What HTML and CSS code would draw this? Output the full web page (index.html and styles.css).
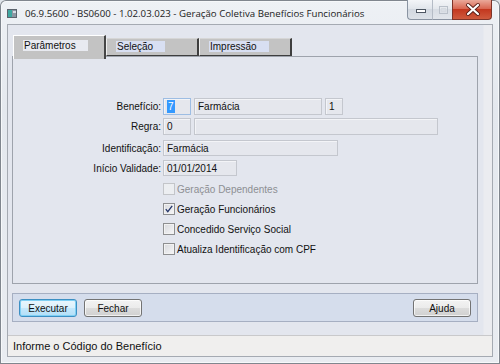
FILE: index.html
```html
<!DOCTYPE html>
<html lang="pt">
<head>
<meta charset="utf-8">
<title>Geração Coletiva Benefícios Funcionários</title>
<link rel="stylesheet" href="styles.css">
</head>
<body>
<div class="window">
  <div class="titlebar">
    <svg class="app-icon" width="10" height="9" viewBox="0 0 10 9">
      <rect x="0.5" y="0.5" width="9" height="8" fill="#8d97a3" stroke="#5b636d"/>
      <rect x="1" y="1" width="4" height="7" fill="#3fa7a1"/>
      <rect x="6" y="2" width="3" height="2" fill="#d7dde4"/>
    </svg>
    <span class="title">06.9.5600 - BS0600 - 1.02.03.023 - Geração Coletiva Benefícios Funcionários</span>
    <div class="controls">
      <span class="ctl min">
        <svg width="25" height="20" viewBox="0 0 25 20"><rect x="8.5" y="9.5" width="9" height="3" fill="#fff" stroke="#4d5662"/></svg>
      </span>
      <span class="ctl max">
        <svg width="20" height="20" viewBox="0 0 20 20"><rect x="6.5" y="6.5" width="8" height="7" fill="none" stroke="#b9c0c9"/><rect x="8.5" y="8.5" width="4" height="3" fill="none" stroke="#d5dae0"/></svg>
      </span>
      <span class="ctl close">
        <svg width="40" height="20" viewBox="0 0 40 20"><path d="M15 5 L25 14 M25 5 L15 14" stroke="#5a1f18" stroke-width="4" stroke-linecap="round"/><path d="M15 5 L25 14 M25 5 L15 14" stroke="#fff" stroke-width="2.2" stroke-linecap="round"/></svg>
      </span>
    </div>
  </div>
  <div class="frame">
    <div class="client">
      <div class="content">
        <div class="tabs">
          <div class="tab active"><span class="tab-label">Parâmetros</span></div>
          <div class="tab"><span class="tab-label">Seleção</span></div>
          <div class="tab"><span class="tab-label">Impressão</span></div>
        </div>
        <div class="panel">
          <div class="row r1">
            <span class="lbl">Benefício:</span>
            <span class="field focus w-code"><span class="sel">7</span></span>
            <span class="field w-name">Farmácia</span>
            <span class="field w-one">1</span>
          </div>
          <div class="row r2">
            <span class="lbl">Regra:</span>
            <span class="field w-code">0</span>
            <span class="field w-long"></span>
          </div>
          <div class="row r3">
            <span class="lbl">Identificação:</span>
            <span class="field w-ident">Farmácia</span>
          </div>
          <div class="row r4">
            <span class="lbl">Início Validade:</span>
            <span class="field w-date">01/01/2014</span>
          </div>
          <div class="checks">
            <div class="check disabled"><span class="box"></span><span class="ck-text">Geração Dependentes</span></div>
            <div class="check"><span class="box checked"><svg width="12" height="12" viewBox="0 0 12 12"><path d="M2.8 6.2 L4.8 8.6 L9.2 2.8" fill="none" stroke="#24366a" stroke-width="1.3"/></svg></span><span class="ck-text">Geração Funcionários</span></div>
            <div class="check"><span class="box"></span><span class="ck-text">Concedido Serviço Social</span></div>
            <div class="check"><span class="box"></span><span class="ck-text">Atualiza Identificação com CPF</span></div>
          </div>
        </div>
        <div class="buttonbar">
          <button class="btn default">Executar</button>
          <button class="btn">Fechar</button>
          <button class="btn help">Ajuda</button>
        </div>
      </div>
      <div class="status">Informe o Código do Benefício</div>
    </div>
  </div>
</div>
</body>
</html>
```
FILE: styles.css
```css
* { box-sizing: border-box; }
html, body { margin: 0; padding: 0; }
body {
  width: 500px;
  height: 364px;
  overflow: hidden;
  font-family: "Liberation Sans", Arial, sans-serif;
  font-size: 10px;
  color: #000;
  background: #dfe4ea;
}
.window {
  width: 500px;
  height: 364px;
  display: flex;
  flex-direction: column;
  background: linear-gradient(#eef1f5, #e4e8ee 30%, #e9ecf1);
  box-shadow: inset 0 0 0 1px #80868e, inset 0 0 0 2px #f6f8fa;
  border-radius: 6px 6px 0 0;
}
.titlebar {
  height: 24px;
  display: flex;
  align-items: center;
  padding-left: 7px;
  padding-top: 2px;
}
.app-icon { margin-right: 8px; flex: none; }
.title {
  font-family: "Open Sans", "Liberation Sans", sans-serif;
  font-size: 9.7px;
  color: #1b1b1b;
  white-space: nowrap;
}
.controls {
  margin-left: auto;
  margin-right: 8px;
  align-self: flex-start;
  margin-top: -2px;
  display: flex;
  height: 20px;
}
.ctl { display: block; height: 20px; }
.ctl svg { display: block; }
.min {
  width: 25px;
  border: 1px solid #8a94a2;
  border-top: none;
  border-right: none;
  border-radius: 0 0 0 4px;
  background: linear-gradient(#f3f5f8, #dfe4ea 50%, #d2d8e0 50%, #dde2e8);
}
.max {
  width: 20px;
  border-bottom: 1px solid #8a94a2;
  border-left: 1px solid #b5bcc6;
  background: linear-gradient(#f3f5f8, #e3e7ec 50%, #d8dde4 50%, #e2e6eb);
}
.close {
  width: 40px;
  border: 1px solid #7e3328;
  border-top: none;
  border-radius: 0 0 4px 0;
  background: linear-gradient(#eaa99a, #d7604a 50%, #c3381f 50%, #cf5a3e);
}
.frame {
  flex: 1;
  display: flex;
  padding: 0 7px 7px 7px;
}
.client {
  flex: 1;
  display: flex;
  flex-direction: column;
  border: 1px solid #a5aab2;
}
.content {
  height: 310px;
  padding: 10px 14px 0 4px;
  background: linear-gradient(to right, #e3e6ee 0, #e3e6ee 475px, #ebecf0 476px);
}
.tabs {
  display: flex;
  align-items: flex-end;
  height: 21px;
  padding-left: 1px;
}
.tab {
  width: 93px;
  height: 18px;
  padding: 2px 0 0 9px;
  background: #c3c3c3;
  border-top: 1px solid #d6d6d6;
  border-left: 1px solid #eeeeee;
  border-right: 2px solid #3e3e3e;
  border-bottom: 1px solid #3e3e3e;
}
.tab.active {
  height: 24px;
  margin-bottom: -3px;
  position: relative;
  z-index: 1;
  padding-top: 4px;
  border-top: 1px solid #ffffff;
  border-left: 1px solid #ffffff;
  border-bottom: none;
  border-right: 2px solid #454545;
}
.tab-label {
  display: inline-block;
  height: 11px;
  line-height: 11px;
  padding: 0 12px 0 1px;
  background: #d8dff2;
  color: #111;
}
.tab.active .tab-label { background: #e8eaf0; }
.panel {
  height: 228px;
  border: 1px solid #9ea3ac;
  padding-top: 41px;
  background: #e3e6ee;
}
.row {
  display: flex;
  align-items: center;
  gap: 3px;
}
.r1, .r2 { height: 17px; }
.r2 { margin-top: 3px; }
.r3 { height: 16px; margin-top: 5px; }
.r4 { height: 16px; margin-top: 4px; }
.lbl {
  width: 148px;
  margin-right: -1px;
  text-align: right;
  white-space: nowrap;
  color: #111;
}
.field {
  display: flex;
  align-items: center;
  height: 100%;
  padding-left: 3px;
  background: #e5e7ed;
  border: 1px solid #c4c7ce;
  box-shadow: inset 1px 1px 0 #f3f4f7;
  white-space: nowrap;
  color: #111;
}
.field.focus { border-color: #9dbde3; }
.sel {
  background: #3399ff;
  color: #fff;
  padding: 1px 1px;
  line-height: 11px;
}
.w-code { width: 28px; }
.w-name { width: 128px; }
.w-one { width: 18px; }
.w-long { width: 244px; }
.w-ident { width: 175px; }
.w-date { width: 74px; }
.checks {
  margin-top: 7px;
  margin-left: 150px;
  display: flex;
  flex-direction: column;
  gap: 8px;
}
.check {
  display: flex;
  align-items: center;
  height: 12px;
}
.box {
  width: 12px;
  height: 12px;
  border: 1px solid #8e8f91;
  background: linear-gradient(135deg, #d7d9dd, #f7f7f8);
  box-shadow: inset 0 0 0 1px #f2f2f2;
  margin-right: 2px;
  position: relative;
}
.box svg { position: absolute; left: -1px; top: -1px; }
.check.disabled .box {
  border-color: #c3c5c9;
  background: #eceef1;
  box-shadow: none;
}
.check.disabled .ck-text { color: #8d8f93; }
.ck-text { color: #111; white-space: nowrap; }
.buttonbar {
  margin-top: 9px;
  height: 29px;
  background: #d5ddec;
  border: 1px solid #a6afc2;
  display: flex;
  align-items: flex-start;
  gap: 7px;
  padding: 5px 6px 0 6px;
}
.btn {
  width: 58px;
  height: 18px;
  padding: 0;
  font-family: "Liberation Sans", Arial, sans-serif;
  font-size: 10px;
  color: #111;
  border: 1px solid #737373;
  border-radius: 3px;
  background: linear-gradient(#f3f3f3, #ebebeb 50%, #dcdcdc 50%, #d0d0d0);
  box-shadow: inset 0 0 0 1px rgba(255,255,255,0.7);
}
.btn.default {
  border-color: #3c8fc3;
  background: linear-gradient(#eaf6fd, #dbf1fc 50%, #c4e8fc 50%, #b3dff7);
  box-shadow: inset 0 0 0 1px #7fd0f4;
}
.btn.help { margin-left: auto; }
.status {
  flex: 1;
  background: #f0efee;
  border-top: 1px solid #c9c9cb;
  padding-left: 5px;
  display: flex;
  align-items: center;
  font-size: 11px;
  color: #111;
}
```
